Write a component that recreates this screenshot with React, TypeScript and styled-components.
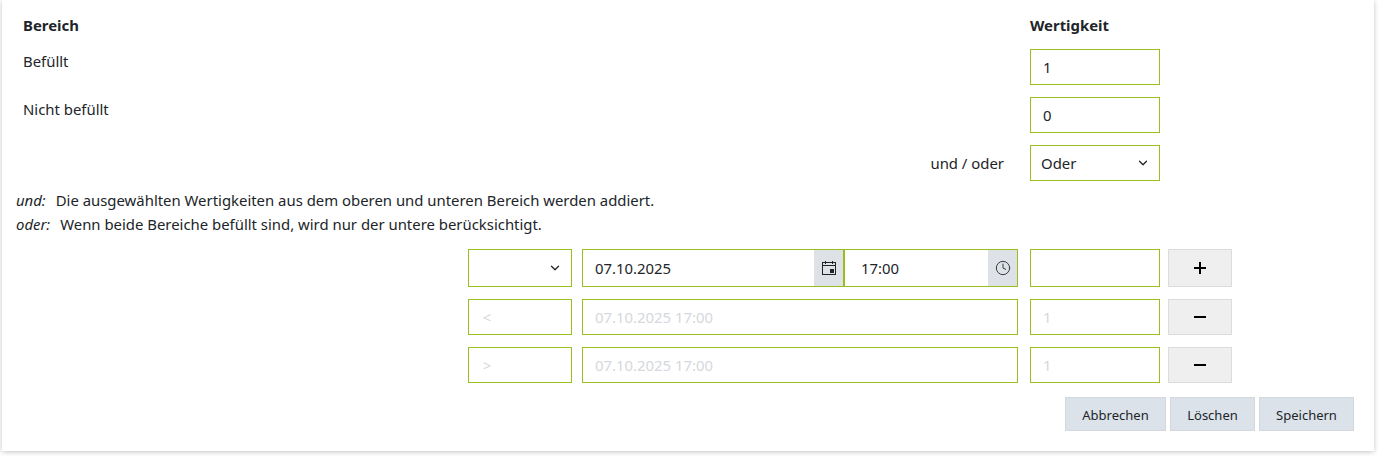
import styled, { createGlobalStyle } from "styled-components";
import { ChevronDown, Clock } from "lucide-react";

const GlobalStyle = createGlobalStyle`
  html, body {
    margin: 0;
    padding: 0;
    min-height: 100vh;
    background: #fff;
    font-family: "Noto Sans", "Open Sans", sans-serif;
    font-size: 14.9px;
    color: #212529;
  }
`;

const Page = styled.div`
  height: 456px;
  overflow: hidden;
`;

const Card = styled.div`
  width: 1372px;
  height: 451px;
  box-sizing: border-box;
  margin-left: 2px;
  padding-top: 16px;
  background: #fff;
  box-shadow: 0 1px 5px rgba(0, 0, 0, 0.24);
`;

const AreaRow = styled.div<{ $height: number; $gap?: number }>`
  display: flex;
  height: ${(p) => p.$height}px;
  margin-bottom: ${(p) => p.$gap ?? 12}px;
  padding: 0 214px 0 21px;
`;

const AreaLabel = styled.div<{ $bold?: boolean }>`
  flex: 1;
  line-height: 19px;
  padding-top: ${(p) => (p.$bold ? 0 : 3)}px;
  font-weight: ${(p) => (p.$bold ? 700 : 400)};
`;

const ValueHead = styled.div`
  width: 130px;
  line-height: 19px;
  font-weight: 700;
`;

const ConnectorLabel = styled.div`
  flex: 1;
  text-align: right;
  padding: 9px 26px 0 0;
  line-height: 19px;
`;

const Notes = styled.div`
  padding: 7px 0 0 14px;
  height: 68px;
  box-sizing: border-box;
  line-height: 24px;
`;

const NoteKey = styled.em`
  margin-right: 10px;
`;

const Line = styled.div`
  white-space: nowrap;
`;

const FormRow = styled.div<{ $height: number; $gap: number }>`
  display: flex;
  height: ${(p) => p.$height}px;
  margin-bottom: ${(p) => p.$gap}px;
  padding-left: 466px;
`;

const Field = styled.input<{ $width: number; $gapRight: number }>`
  box-sizing: border-box;
  width: ${(p) => p.$width}px;
  margin-right: ${(p) => p.$gapRight}px;
  padding: 0 10px 0 12px;
  border: 1px solid #98bf1f;
  border-radius: 0;
  outline: none;
  background: #fff;
  font: inherit;
  color: #212529;
  &:disabled {
    color: #d5d8dc;
  }
`;

const SelectBox = styled.div<{ $width: number; $gapRight: number; $muted?: boolean }>`
  box-sizing: border-box;
  display: flex;
  align-items: center;
  justify-content: space-between;
  width: ${(p) => p.$width}px;
  margin-right: ${(p) => p.$gapRight}px;
  padding: 0 9px 0 10px;
  border: 1px solid #98bf1f;
  color: ${(p) => (p.$muted ? "#d5d8dc" : "#212529")};
`;

const PickerGroup = styled.div`
  display: flex;
  width: 436px;
  margin-right: 12px;
`;

const PickerPart = styled.div<{ $width: number }>`
  box-sizing: border-box;
  display: flex;
  width: ${(p) => p.$width}px;
  border: 1px solid #98bf1f;
`;

const PickerInput = styled.input<{ $indent: number }>`
  flex: 1;
  min-width: 0;
  padding: 0 0 0 ${(p) => p.$indent}px;
  border: none;
  outline: none;
  font: inherit;
  color: #212529;
`;

const PickerIcon = styled.div`
  display: flex;
  align-items: center;
  justify-content: center;
  width: 29px;
  background: #dee2e6;
  color: #343a40;
`;

const SquareButton = styled.button`
  box-sizing: border-box;
  display: flex;
  align-items: center;
  justify-content: center;
  width: 64px;
  margin-left: 8px;
  padding: 0;
  border: 1px solid #dcdcdc;
  background: #efefef;
`;

const Footer = styled.div`
  display: flex;
  justify-content: flex-end;
  gap: 4px;
  margin-top: 14px;
  padding-right: 20px;
`;

const FooterButton = styled.button<{ $width: number }>`
  box-sizing: border-box;
  width: ${(p) => p.$width}px;
  height: 34px;
  padding: 1px 0 0;
  border: 1px solid #d3d8de;
  background: #dce2ea;
  font: inherit;
  font-size: 13px;
  color: #212529;
`;

const CalendarIcon = () => (
  <svg width="16" height="16" viewBox="0 0 16 16" fill="none" stroke="#212529" strokeWidth="1">
    <rect x="1.5" y="2.5" width="13" height="12" />
    <path d="M1.5 5.5h13M4.5 1v3M11.5 1v3" />
    <rect x="9" y="9" width="4" height="4" fill="#212529" stroke="none" />
  </svg>
);

const PlusIcon = () => (
  <svg width="12" height="12" viewBox="0 0 12 12" stroke="#000" strokeWidth="2">
    <path d="M0 6h12M6 0v12" />
  </svg>
);

const MinusIcon = () => (
  <svg width="12" height="12" viewBox="0 0 12 12" stroke="#000" strokeWidth="2">
    <path d="M0 6h12" />
  </svg>
);

export default function App() {
  return (
    <Page>
      <GlobalStyle />
      <Card>
        <AreaRow $height={21}>
          <AreaLabel $bold>Bereich</AreaLabel>
          <ValueHead>Wertigkeit</ValueHead>
        </AreaRow>
        <AreaRow $height={36}>
          <AreaLabel>Befüllt</AreaLabel>
          <Field $width={130} $gapRight={0} defaultValue="1" />
        </AreaRow>
        <AreaRow $height={36}>
          <AreaLabel>Nicht befüllt</AreaLabel>
          <Field $width={130} $gapRight={0} defaultValue="0" />
        </AreaRow>
        <AreaRow $height={36} $gap={0}>
          <ConnectorLabel>und / oder</ConnectorLabel>
          <SelectBox $width={130} $gapRight={0}>
            Oder
            <ChevronDown size={14} strokeWidth={2.25} />
          </SelectBox>
        </AreaRow>
        <Notes>
          <Line>
            <NoteKey>und:</NoteKey>Die ausgewählten Wertigkeiten aus dem oberen und unteren Bereich werden addiert.
          </Line>
          <Line>
            <NoteKey>oder:</NoteKey>Wenn beide Bereiche befüllt sind, wird nur der untere berücksichtigt.
          </Line>
        </Notes>
        <FormRow $height={38} $gap={12}>
          <SelectBox $width={104} $gapRight={10}>
            <span />
            <ChevronDown size={14} strokeWidth={2.25} />
          </SelectBox>
          <PickerGroup>
            <PickerPart $width={262}>
              <PickerInput $indent={12} defaultValue="07.10.2025" />
              <PickerIcon>
                <CalendarIcon />
              </PickerIcon>
            </PickerPart>
            <PickerPart $width={174}>
              <PickerInput $indent={16} defaultValue="17:00" />
              <PickerIcon>
                <Clock size={16} strokeWidth={1.5} />
              </PickerIcon>
            </PickerPart>
          </PickerGroup>
          <Field $width={130} $gapRight={0} />
          <SquareButton>
            <PlusIcon />
          </SquareButton>
        </FormRow>
        <FormRow $height={36} $gap={12}>
          <SelectBox $width={104} $gapRight={10} $muted>
            {"\u00a0<"}
          </SelectBox>
          <Field $width={436} $gapRight={12} disabled defaultValue="07.10.2025 17:00" />
          <Field $width={130} $gapRight={0} disabled defaultValue="1" />
          <SquareButton>
            <MinusIcon />
          </SquareButton>
        </FormRow>
        <FormRow $height={36} $gap={0}>
          <SelectBox $width={104} $gapRight={10} $muted>
            {"\u00a0>"}
          </SelectBox>
          <Field $width={436} $gapRight={12} disabled defaultValue="07.10.2025 17:00" />
          <Field $width={130} $gapRight={0} disabled defaultValue="1" />
          <SquareButton>
            <MinusIcon />
          </SquareButton>
        </FormRow>
        <Footer>
          <FooterButton $width={101}>Abbrechen</FooterButton>
          <FooterButton $width={85}>Löschen</FooterButton>
          <FooterButton $width={95}>Speichern</FooterButton>
        </Footer>
      </Card>
    </Page>
  );
}
